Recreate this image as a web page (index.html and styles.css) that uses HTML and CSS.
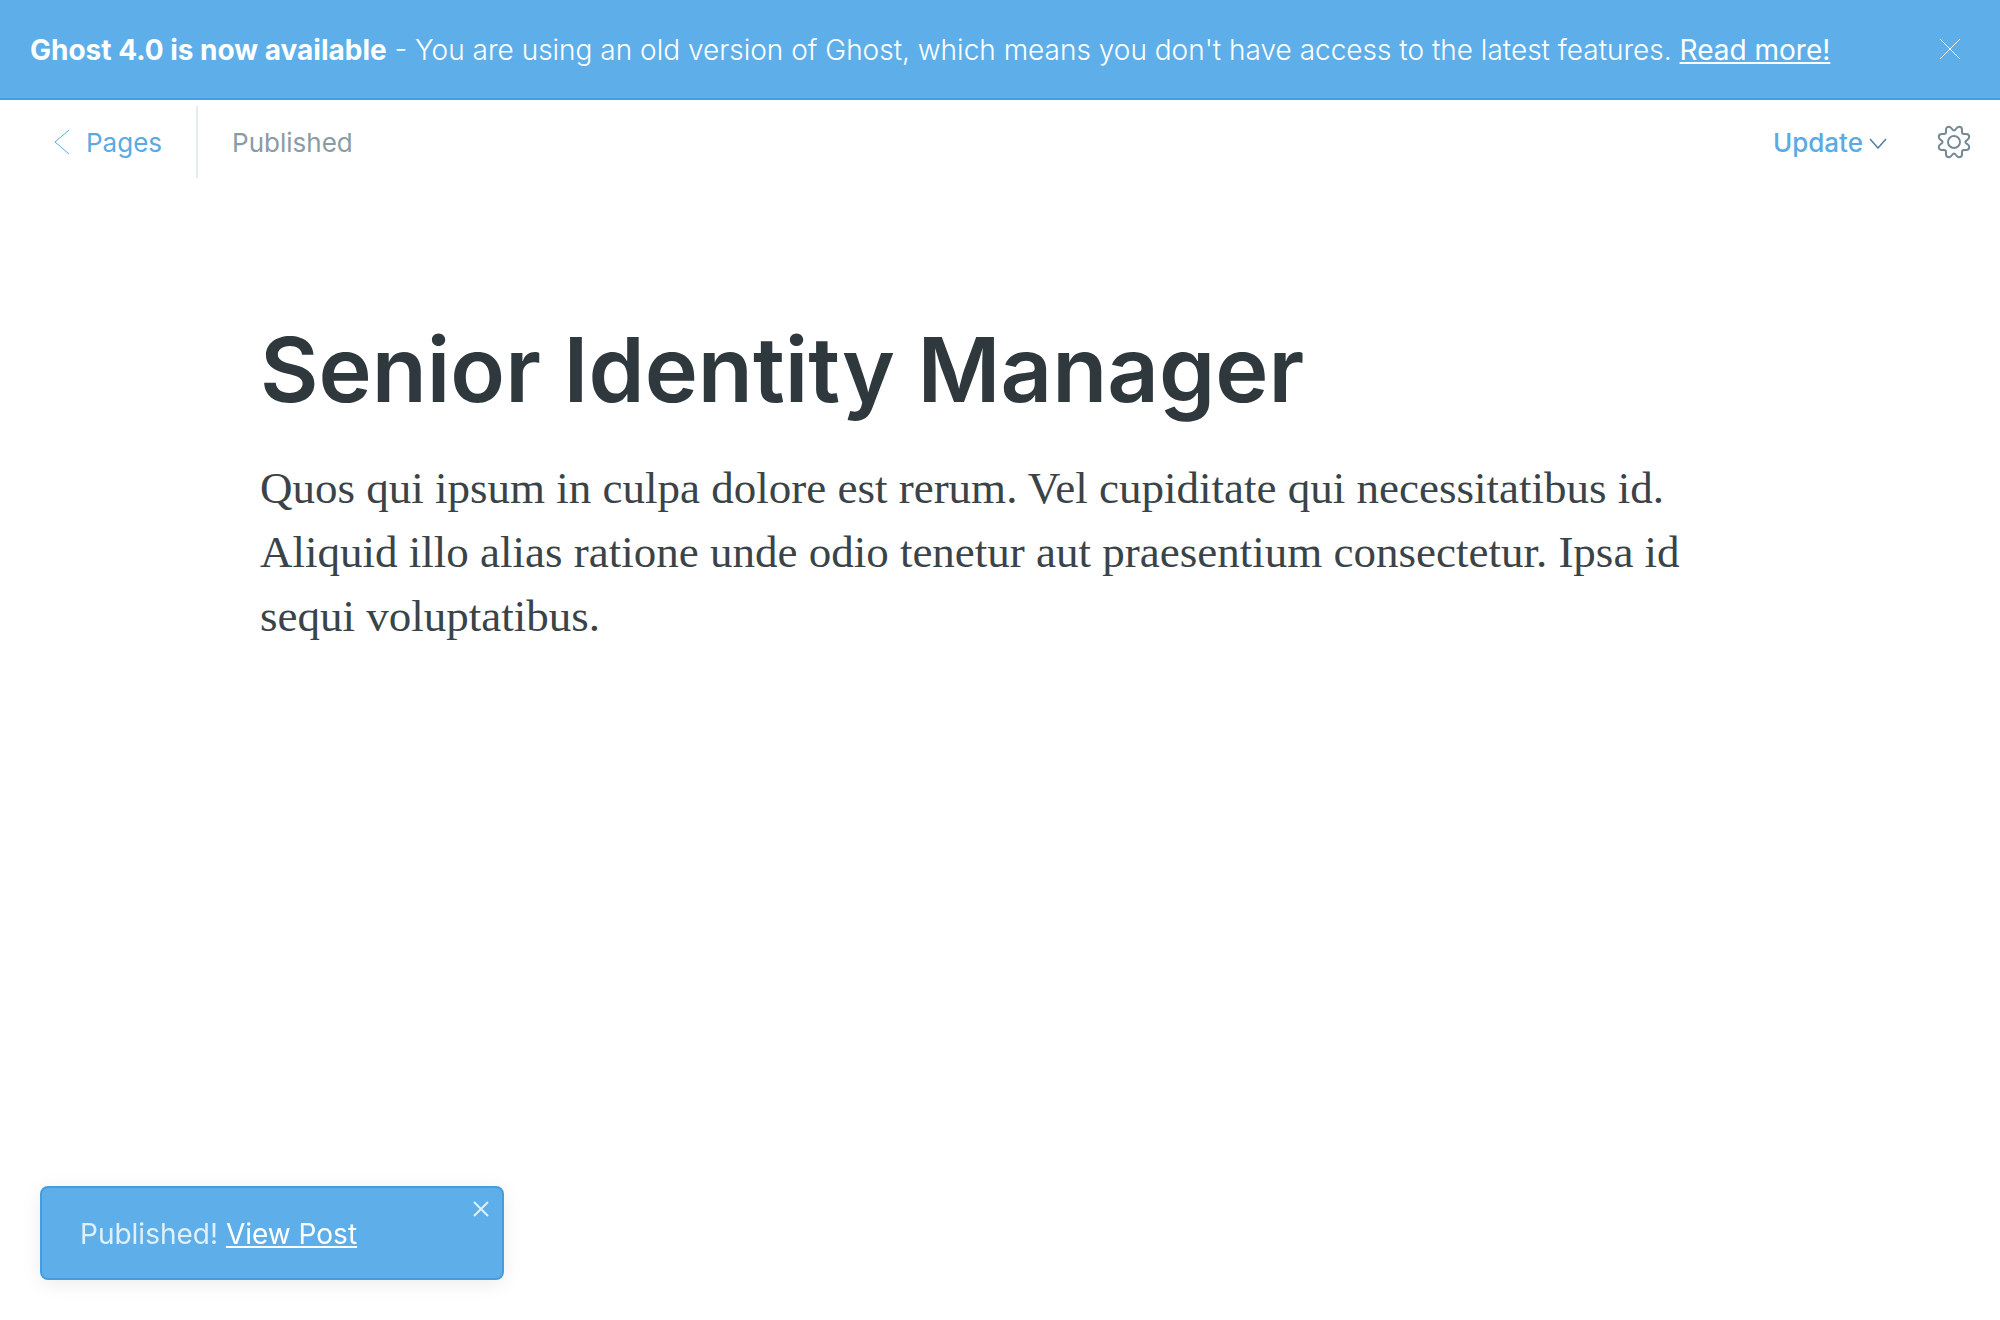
FILE: index.html
```html
<!DOCTYPE html>
<html lang="en">
<head>
<meta charset="utf-8">
<meta name="viewport" content="width=device-width, initial-scale=1">
<title>Senior Identity Manager</title>
<link rel="stylesheet" href="styles.css">
</head>
<body>
<aside class="banner">
  <p class="banner-text"><strong>Ghost 4.0 is now available</strong> - You are using an old version of Ghost, which means you don't have access to the latest features. <a class="banner-link" href="#">Read more!</a></p>
  <button class="icon-button" type="button" aria-label="Close banner">
    <svg width="22" height="22" viewBox="0 0 22 22"><path d="M1 1l20 20M21 1L1 21"/></svg>
  </button>
</aside>
<header class="toolbar">
  <nav class="toolbar-back">
    <a class="back-link" href="#">
      <svg width="16" height="26" viewBox="0 0 16 26"><path d="M15 1L1 13l14 12"/></svg>
      <span class="label">Pages</span>
    </a>
  </nav>
  <span class="status label">Published</span>
  <div class="toolbar-actions">
    <button class="update" type="button">
      <span class="label">Update</span>
      <svg width="18" height="12" viewBox="0 0 18 12"><path d="M1 2l8 9 8-9"/></svg>
    </button>
    <button class="icon-button settings" type="button" aria-label="Settings">
      <svg width="34" height="34" viewBox="0 0 34 34"><circle cx="17" cy="17" r="6"/><path d="M17 5.6C19 5.6 19 1.8 22 1.8C24 1.8 25 3 25 4.8V7Q25 9 27 9H29.2C31 9 32.2 10 32.2 12C32.2 15 28.4 15 28.4 17C28.4 19 32.2 19 32.2 22C32.2 24 31 25 29.2 25H27Q25 25 25 27V29.2C25 31 24 32.2 22 32.2C19 32.2 19 28.4 17 28.4C15 28.4 15 32.2 12 32.2C10 32.2 9 31 9 29.2V27Q9 25 7 25H4.8C3 25 1.8 24 1.8 22C1.8 19 5.6 19 5.6 17C5.6 15 1.8 15 1.8 12C1.8 10 3 9 4.8 9H7Q9 9 9 7V4.8C9 3 10 1.8 12 1.8C15 1.8 15 5.6 17 5.6Z"/></svg>
    </button>
  </div>
</header>
<main class="editor">
  <h1 class="title">Senior Identity Manager</h1>
  <p class="body-text">Quos qui ipsum in culpa dolore est rerum. Vel cupiditate qui necessitatibus id. Aliquid illo alias ratione unde odio tenetur aut praesentium consectetur. Ipsa id sequi voluptatibus.</p>
</main>
<div class="toast" role="status">
  <p class="toast-text">Published! <a class="toast-link" href="#">View Post</a></p>
  <button class="toast-close" type="button" aria-label="Dismiss">
    <svg width="16" height="16" viewBox="0 0 16 16"><path d="M1 1l14 14M15 1L1 15"/></svg>
  </button>
</div>
</body>
</html>
```
FILE: styles.css
```css
* {
  box-sizing: border-box;
}

body {
  margin: 0;
  background: #fff;
  color: #2f383c;
  font-family: Inter, "Liberation Sans", sans-serif;
  font-size: 26px;
  line-height: 36px;
}

p,
h1 {
  margin: 0;
}

button {
  padding: 0;
  border: 0;
  background: none;
  color: inherit;
  font: inherit;
  cursor: pointer;
}

svg {
  display: block;
  flex: none;
  fill: none;
  stroke: currentColor;
}

.banner {
  display: flex;
  align-items: center;
  justify-content: space-between;
  gap: 24px;
  padding: 29px 39px 29px 30px;
  border-bottom: 2px solid #459cde;
  background: #5eafe9;
  color: #fff;
}

.banner-text {
  padding-top: 2px;
  font-size: 28px;
  line-height: 38px;
  font-weight: 300;
}

.banner-text strong {
  font-weight: 700;
}

.banner-link {
  color: #fff;
  font-weight: 400;
}

.icon-button {
  flex: none;
}

.toolbar {
  display: flex;
  align-items: center;
  padding: 6px 29px 6px 0;
}

.toolbar-back {
  display: flex;
  align-items: center;
  height: 72px;
  padding: 0 34px 0 54px;
  border-right: 2px solid #e5ebef;
}

.back-link {
  display: flex;
  align-items: center;
  gap: 16px;
  color: #5aaae4;
  text-decoration: none;
}

.label {
  padding-top: 2px;
}

.status {
  padding-left: 34px;
  color: #8a9ba5;
}

.toolbar-actions {
  display: flex;
  align-items: center;
  gap: 50px;
  margin-left: auto;
}

.update {
  display: flex;
  align-items: center;
  gap: 6px;
  color: #5aaae4;
  font-weight: 500;
}

.update svg {
  margin-top: 2px;
  color: #4c7fa6;
  stroke-width: 1.5;
}

.settings {
  color: #738a94;
}

.settings svg {
  stroke-width: 2;
}

.editor {
  max-width: 1560px;
  margin: 0 auto;
  padding: 132px 40px;
}

.title {
  font-size: 90px;
  line-height: 108px;
  font-weight: 600;
}

.body-text {
  margin-top: 32px;
  color: #3a4448;
  font-family: "Liberation Serif", serif;
  font-size: 45px;
  line-height: 64px;
}

.toast {
  position: fixed;
  bottom: 40px;
  left: 40px;
  display: flex;
  justify-content: space-between;
  width: 464px;
  padding: 13px;
  border: 2px solid #459cde;
  border-radius: 8px;
  background: #5eafe9;
  box-shadow: 0 4px 20px rgba(0, 0, 0, 0.08);
  color: #e0f0fb;
}

.toast-text {
  padding: 14px 25px 12px;
  font-size: 28px;
  line-height: 38px;
}

.toast-link {
  color: #fff;
}

.toast-close {
  align-self: flex-start;
}

.toast-close svg {
  stroke-width: 2;
}
```
